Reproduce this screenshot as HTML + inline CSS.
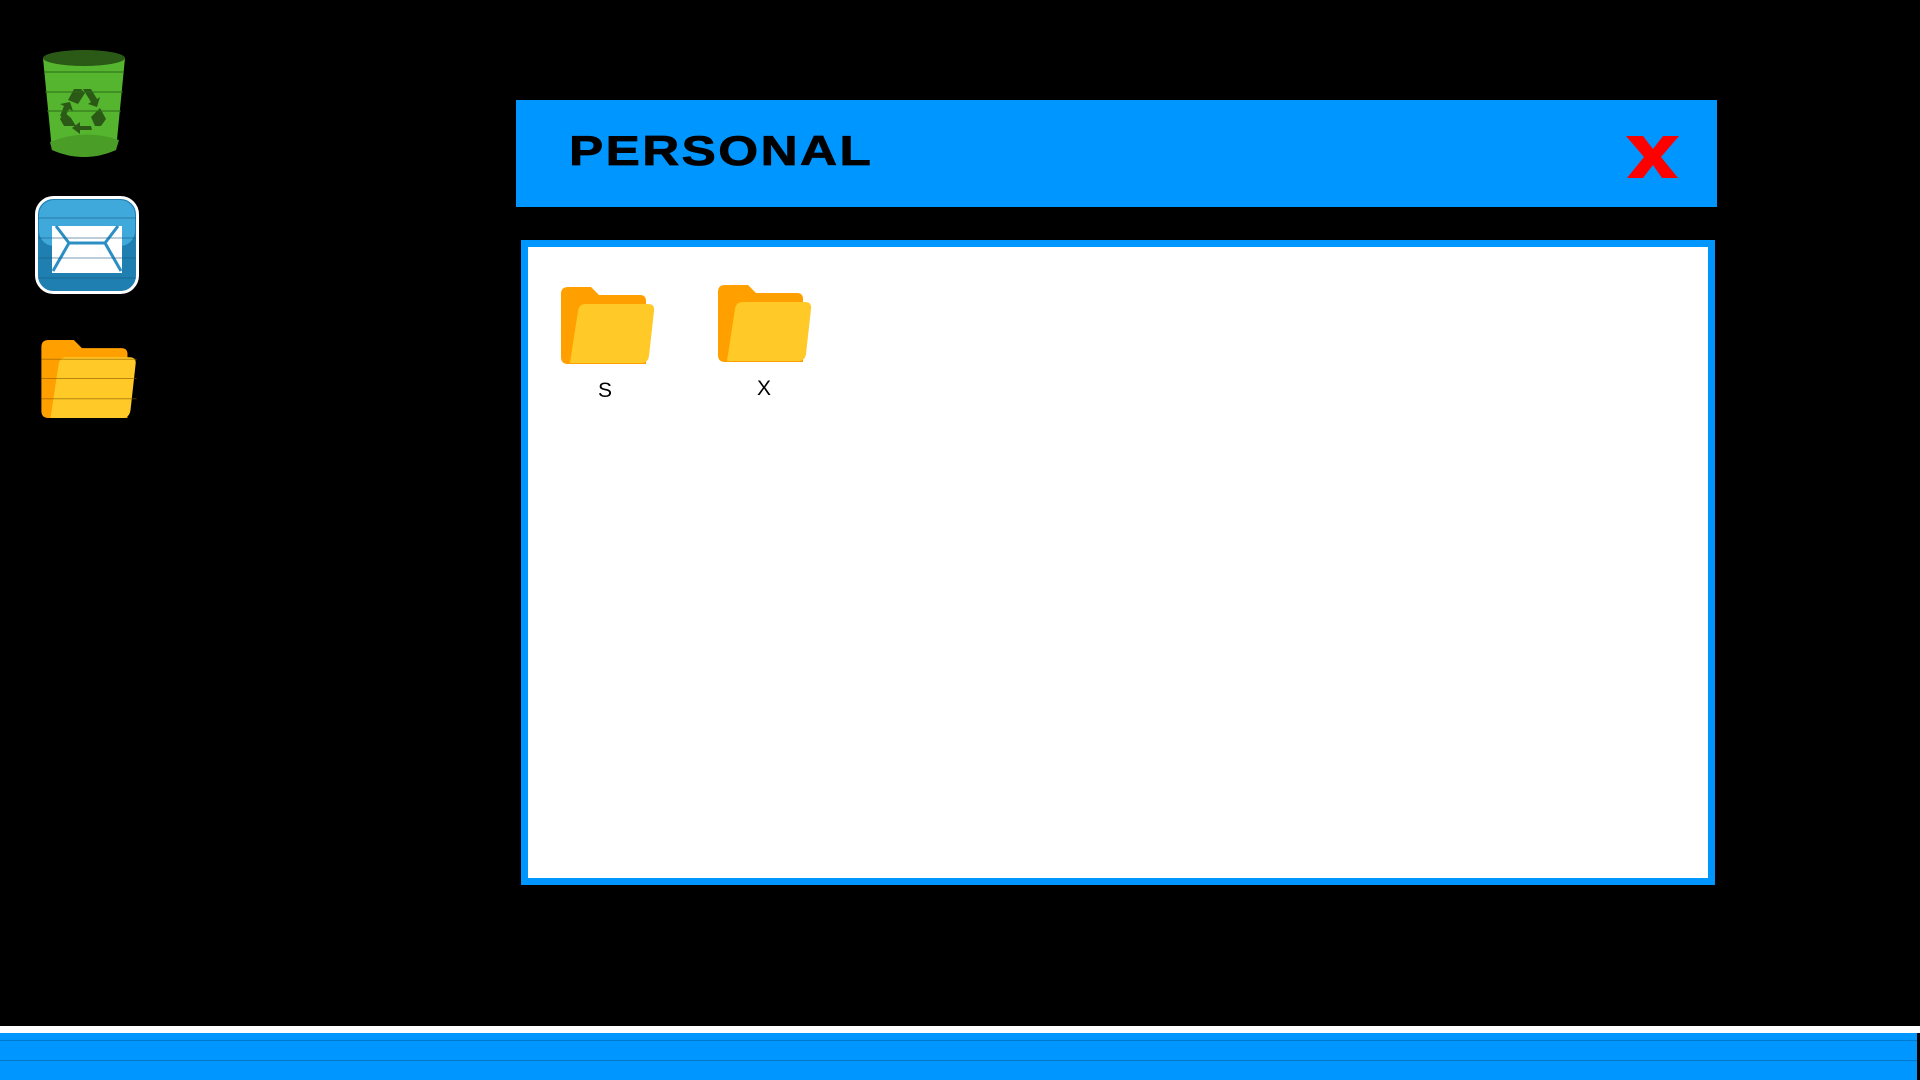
<!DOCTYPE html>
<html><head><meta charset="utf-8"><style>
html,body{margin:0;padding:0;background:#000;width:1920px;height:1080px;overflow:hidden;position:relative;font-family:"Liberation Sans",sans-serif}
.abs{position:absolute}
.hdr{left:516px;top:100px;width:1201px;height:107px;background:#0096ff}
.title{left:569px;top:126px;font-size:42px;font-weight:bold;letter-spacing:2px;color:#000;line-height:50px;transform:scaleX(1.22);transform-origin:0 0;-webkit-text-stroke:0.8px #000}
.panel{left:521px;top:240px;width:1180px;height:631px;background:#fff;border:7px solid #0096ff}
.lbl{font-size:21px;color:#000;width:60px;text-align:center}
</style></head><body>
<svg class="abs" style="left:40px;top:48px" width="90" height="114" viewBox="0 0 90 114">
<path d="M3 10 L12 102 Q44 116 76 102 L85 10 Z" fill="#55b52e"/>
<path d="M10 94 Q44 80 79 92 L76 102 Q44 116 12 102 Z" fill="#4a9e28"/>
<ellipse cx="44" cy="10" rx="41" ry="8" fill="#2a5a16"/>
<g fill="#2a5a16" transform="translate(0,12)">
<polygon points="28,40 34,29 41,29 45,33 38,44"/>
<polygon points="43,29 51,29 57,39 60,37 57,47 48,44 51,42 46,34"/>
<polygon points="60,48 66,59 61,66 55,66 51,57"/>
<polygon points="51,66 40,66 40,62 32,68 40,74 40,70 52,70"/>
<polygon points="36,66 24,66 20,59 24,52 31,58"/>
<polygon points="20,56 24,46 20,44 30,42 33,51 29,49 25,57"/>
</g>
<g stroke="#2d6a1a" stroke-width="1"><line x1="4" y1="24" x2="84" y2="24"/><line x1="5" y1="44" x2="83" y2="44"/><line x1="7" y1="63" x2="81" y2="63"/></g>
</svg>
<svg class="abs" style="left:35px;top:196px" width="104" height="98" viewBox="0 0 104 98">
<rect x="1.5" y="1.5" width="101" height="95" rx="17" fill="#1e7fb0" stroke="#fff" stroke-width="3"/>
<rect x="4" y="4" width="96" height="46" rx="15" fill="#3fa9dc"/>
<path d="M17 30 L87 30 L87 77 L17 77 Z" fill="#fff"/>
<path d="M21 30 L34 47 L70 47 L83 30 M18 75 L34 47 M86 75 L70 47" fill="none" stroke="#2b8fc4" stroke-width="3"/>
<g stroke="#1a5a80" stroke-width="1" opacity=".6"><line x1="3" y1="22" x2="101" y2="22"/><line x1="3" y1="42" x2="101" y2="42"/><line x1="3" y1="62" x2="101" y2="62"/><line x1="3" y1="82" x2="101" y2="82"/></g>
</svg>
<svg class="abs" style="left:41px;top:340px" width="96" height="78" viewBox="0 0 94 77">
<path d="M0 7 Q0 0 7 0 L32 0 L40 8 L79 8 Q85 8 85 14 L85 77 L7 77 Q0 77 0 70 Z" fill="#ffa000"/>
<path d="M17 24 Q18 17 25 17 L87 17 Q94 17 93 24 L88 69 Q87 77 80 77 L9 77 Z" fill="#ffca28"/>
<g stroke="#8a5a00" stroke-width="1" opacity=".6"><line x1="0" y1="19" x2="94" y2="19"/><line x1="0" y1="38" x2="94" y2="38"/><line x1="0" y1="58" x2="94" y2="58"/></g>
</svg>
<div class="abs hdr"></div>
<div class="abs title">PERSONAL</div>
<svg class="abs" style="left:1626px;top:136px" width="54" height="43" viewBox="0 0 54 43">
<polygon points="0,0 17,0 27,13 37,0 53,0 35,21 52,42 36,42 27,29 17,42 1,42 18,21" fill="#ff0000"/>
</svg>
<div class="abs panel"></div>
<svg class="abs" style="left:561px;top:287px" width="94" height="77" viewBox="0 0 94 77">
<path d="M0 7 Q0 0 7 0 L30 0 L38 8 L79 8 Q85 8 85 14 L85 77 L7 77 Q0 77 0 70 Z" fill="#ffa000"/>
<path d="M17 24 Q18 17 25 17 L87 17 Q94 17 93 24 L88 69 Q87 76 80 76 L9 76 Z" fill="#ffca28"/>
</svg>
<svg class="abs" style="left:718px;top:285px" width="94" height="77" viewBox="0 0 94 77">
<path d="M0 7 Q0 0 7 0 L30 0 L38 8 L79 8 Q85 8 85 14 L85 77 L7 77 Q0 77 0 70 Z" fill="#ffa000"/>
<path d="M17 24 Q18 17 25 17 L87 17 Q94 17 93 24 L88 69 Q87 76 80 76 L9 76 Z" fill="#ffca28"/>
</svg>
<div class="abs lbl" style="left:575px;top:379px">S</div>
<div class="abs lbl" style="left:734px;top:377px">X</div>
<div class="abs" style="left:0;top:1026px;width:1920px;height:7px;background:#fff"></div>
<div class="abs" style="left:0;top:1033px;width:1917px;height:47px;background:#0096ff"></div>
<div class="abs" style="left:0;top:1040px;width:1917px;height:1px;background:#0078cc"></div>
<div class="abs" style="left:0;top:1060px;width:1917px;height:1px;background:#0078cc"></div>
</body></html>
